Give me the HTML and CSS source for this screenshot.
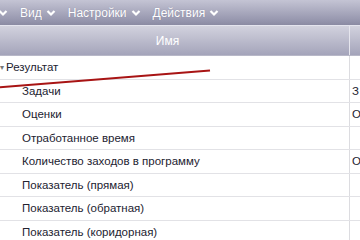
FILE: index.html
```html
<!DOCTYPE html>
<html lang="ru">
  <head>
    <meta charset="UTF-8" />
    <title>Результат</title>
    <link rel="stylesheet" href="styles.css">
  </head>
  <body>
    <div class="menubar">
      <span class="menu-item"><svg class="chev" viewBox="0 0 10 8"><polyline points="1.5,2 5,5.5 8.5,2" /></svg></span>
      <span class="menu-item">Вид <svg class="chev" viewBox="0 0 10 8"><polyline points="1.5,2 5,5.5 8.5,2" /></svg></span>
      <span class="menu-item">Настройки <svg class="chev" viewBox="0 0 10 8"><polyline points="1.5,2 5,5.5 8.5,2" /></svg></span>
      <span class="menu-item">Действия <svg class="chev" viewBox="0 0 10 8"><polyline points="1.5,2 5,5.5 8.5,2" /></svg></span>
    </div>

    <div class="grid">
      <div class="head">
        <div class="col-name">Имя</div>
        <div class="col-val"></div>
      </div>

      <div class="row">
        <div class="col-name group"><span class="toggle">▾</span>Результат</div>
        <div class="col-val"></div>
      </div>
      <div class="row">
        <div class="col-name child">Задачи</div>
        <div class="col-val">З</div>
      </div>
      <div class="row">
        <div class="col-name child">Оценки</div>
        <div class="col-val">О</div>
      </div>
      <div class="row">
        <div class="col-name child">Отработанное время</div>
        <div class="col-val"></div>
      </div>
      <div class="row">
        <div class="col-name child">Количество заходов в программу</div>
        <div class="col-val">О</div>
      </div>
      <div class="row">
        <div class="col-name child">Показатель (прямая)</div>
        <div class="col-val"></div>
      </div>
      <div class="row">
        <div class="col-name child">Показатель (обратная)</div>
        <div class="col-val"></div>
      </div>
      <div class="row">
        <div class="col-name child">Показатель (коридорная)</div>
        <div class="col-val"></div>
      </div>
    </div>

    <!-- annotation stroke drawn over the page -->
    <svg class="mark" viewBox="0 0 360 240">
      <line x1="-2" y1="87.5" x2="210" y2="70.5" />
    </svg>
  </body>
</html>
```

FILE: styles.css
```css
body {
  margin: 0;
  width: 360px;
  height: 240px;
  overflow: hidden;
  position: relative;
  background: #fff;
  font-family: "Liberation Sans", Arial, sans-serif;
}
.menubar {
  height: 25px;
  display: flex;
  align-items: center;
  gap: 12px;
  margin-left: -2px;
  background: linear-gradient(#c4c4d4, #9494ac 85%, #8a8aa2);
  border-bottom: 1px solid #e4e4ee;
  color: #fff;
  font-size: 12px;
}
.menu-item {
  display: flex;
  align-items: center;
  gap: 4px;
  text-shadow: 0 0 1px rgba(80, 80, 110, 0.4);
}
.chev {
  width: 10px;
  height: 8px;
}
.chev polyline {
  fill: none;
  stroke: #fff;
  stroke-width: 2.2;
}
.head {
  height: 29px;
  display: flex;
  background: linear-gradient(#d2d2de, #a4a4ba);
  border-bottom: 1px solid #b8b8c8;
  color: #fff;
  font-size: 12px;
}
.head .col-name {
  justify-content: center;
  padding-right: 14px;
  border-right: 1px solid #e6e6ee;
}
.row {
  height: 22.5px;
  display: flex;
  border-bottom: 1px solid #e2e2e6;
  font-size: 11.5px;
  color: #222230;
}
.col-name {
  width: 350px;
  display: flex;
  align-items: center;
  box-sizing: border-box;
  border-right: 1px solid #dcdce0;
  white-space: nowrap;
}
.col-val {
  flex: 1;
  display: flex;
  align-items: center;
  padding-left: 2px;
  white-space: nowrap;
  overflow: hidden;
}
.toggle {
  font-size: 8px;
  color: #777;
  width: 6px;
}
.child {
  padding-left: 22px;
}
.mark {
  position: absolute;
  left: 0;
  top: 0;
  width: 360px;
  height: 240px;
  pointer-events: none;
}
.mark line {
  stroke: #a81414;
  stroke-width: 2;
}
```
